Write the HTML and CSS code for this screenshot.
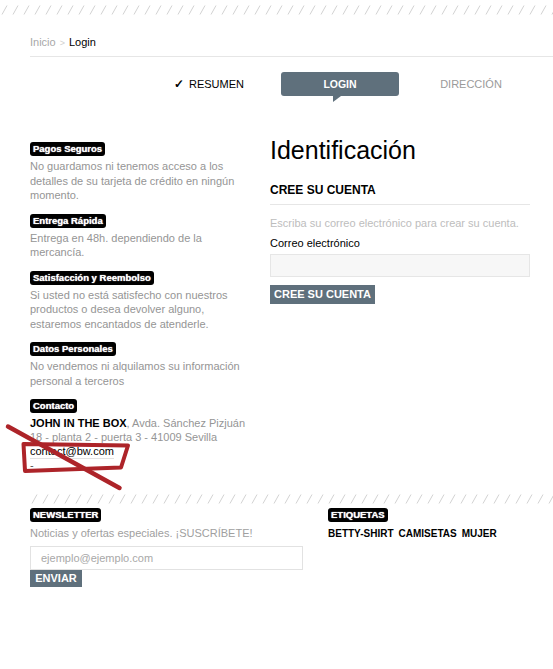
FILE: index.html
```html
<!DOCTYPE html>
<html lang="es">
<head>
<meta charset="utf-8">
<title>Login</title>
<link rel="stylesheet" href="styles.css">
</head>
<body>
<svg class="hatch hatch-top" width="100%" height="10" aria-hidden="true">
  <defs>
    <pattern id="hatchA" width="11" height="10" patternUnits="userSpaceOnUse">
      <line x1="2" y1="9.5" x2="7" y2="0.5" stroke="#d2d2d2" stroke-width="1"/>
    </pattern>
  </defs>
  <rect width="100%" height="10" fill="url(#hatchA)"/>
</svg>

<div class="page">
  <div class="breadcrumb"><span class="crumb">Inicio</span><span class="sep">&gt;</span><span class="current">Login</span></div>

  <div class="wrap">
    <div class="steps">
      <div class="step done"><span class="check">&#10003;</span>RESUMEN</div>
      <div class="step active">LOGIN</div>
      <div class="step">DIRECCIÓN</div>
    </div>

    <div class="main">
      <aside class="info">
        <div class="item">
          <h4 class="badge">Pagos Seguros</h4>
          <p>No guardamos ni tenemos acceso a los detalles de su tarjeta de crédito en ningún momento.</p>
        </div>
        <div class="item">
          <h4 class="badge">Entrega Rápida</h4>
          <p>Entrega en 48h. dependiendo de la mercancía.</p>
        </div>
        <div class="item">
          <h4 class="badge">Satisfacción y Reembolso</h4>
          <p>Si usted no está satisfecho con nuestros productos o desea devolver alguno, estaremos encantados de atenderle.</p>
        </div>
        <div class="item">
          <h4 class="badge">Datos Personales</h4>
          <p>No vendemos ni alquilamos su información personal a terceros</p>
        </div>
        <div class="item contact">
          <h4 class="badge">Contacto</h4>
          <p><strong>JOHN IN THE BOX</strong>, Avda. Sánchez Pizjuán 18 - planta 2 - puerta 3 - 41009 Sevilla</p>
          <div class="mail"><span>contact@bw.com</span></div>
          <div class="dash">-</div>
        </div>
      </aside>

      <section class="auth">
        <h1>Identificación</h1>
        <h3>CREE SU CUENTA</h3>
        <p class="hint">Escriba su correo electrónico para crear su cuenta.</p>
        <label class="label">Correo electrónico</label>
        <div class="field"></div>
        <button class="btn btn-create">CREE SU CUENTA</button>
      </section>
    </div>
  </div>

  <svg class="hatch hatch-bottom" width="100%" height="10" aria-hidden="true">
    <defs>
      <pattern id="hatchB" width="11" height="10" patternUnits="userSpaceOnUse">
        <line x1="2" y1="9.5" x2="7" y2="0.5" stroke="#d2d2d2" stroke-width="1"/>
      </pattern>
    </defs>
    <rect width="100%" height="10" fill="url(#hatchB)"/>
  </svg>

  <footer class="footer">
    <div class="newsletter">
      <h4 class="badge">NEWSLETTER</h4>
      <p>Noticias y ofertas especiales. ¡SUSCRÍBETE!</p>
      <div class="nl-input">ejemplo@ejemplo.com</div>
      <button class="btn btn-send">ENVIAR</button>
    </div>
    <div class="tags">
      <h4 class="badge">ETIQUETAS</h4>
      <div class="tag-list"><span>BETTY-SHIRT</span><span>CAMISETAS</span><span>MUJER</span></div>
    </div>
  </footer>
</div>

<svg class="markup" width="140" height="80" viewBox="0 420 140 80" aria-hidden="true">
  <path d="M23.5 444 L128 445.5 L121 467.5 L25 471 Z" fill="none" stroke="#ad2429" stroke-width="4" stroke-linejoin="round"/>
  <path d="M8 426.5 L119.5 488" fill="none" stroke="#ad2429" stroke-width="4.5" stroke-linecap="round"/>
</svg>
</body>
</html>
```

FILE: styles.css
```css
* { box-sizing: border-box; }

body {
  margin: 0;
  position: relative;
  background: #fff;
  color: #000;
  font-family: "Liberation Sans", Arial, sans-serif;
  font-size: 11px;
  line-height: 14.5px;
}

.hatch { display: block; }
.hatch-top { margin-top: 5px; }

.page { padding-left: 30px; }

.breadcrumb {
  margin-top: 20px;
  padding-bottom: 6px;
  border-bottom: 1px solid #e6e6e6;
  line-height: 14px;
}
.crumb { color: #a8a8a8; }
.sep { color: #d0d0d0; margin: 0 4px; font-size: 9px; }
.current { color: #000; }

.wrap { width: 500px; }

.steps {
  display: flex;
  justify-content: flex-end;
  gap: 13px;
  margin-top: 15px;
}
.step {
  position: relative;
  width: 118px;
  height: 24px;
  line-height: 24px;
  text-align: center;
  font-size: 11px;
  color: #9a9a9a;
}
.step.done { color: #000; }
.check { font-size: 12px; font-weight: bold; margin-right: 5px; }
.step.active {
  background: #5f707c;
  color: #fff;
  font-weight: bold;
  font-size: 10.5px;
  border-radius: 3px;
}
.step.active::after {
  content: "";
  position: absolute;
  left: 52px;
  top: 24px;
  width: 0;
  height: 0;
  border-top: 6px solid #5f707c;
  border-right: 8px solid transparent;
}

.main {
  display: flex;
  gap: 20px;
  margin-top: 40px;
}

.info { width: 220px; padding-top: 6px; }
.item { margin-bottom: 11px; }
.item p { margin: 3px 0 0; color: #959595; }
.item p strong { color: #000; }
.contact p { line-height: 14px; }

.badge {
  display: block;
  width: fit-content;
  margin: 0;
  padding: 0 3px;
  background: #000;
  color: #fff;
  font-size: 9.5px;
  font-weight: bold;
  line-height: 14px;
  border-radius: 3px;
  text-shadow: 0 0 1px #fff;
}

.mail { line-height: 14px; }
.mail span {
  display: inline-block;
  color: #000;
  border-bottom: 1px solid #e2e2e2;
}
.dash { color: #555; line-height: 12px; }

.auth { width: 260px; }
.auth h1 {
  margin: 0;
  font-size: 25px;
  font-weight: normal;
  line-height: 28px;
}
.auth h3 {
  margin: 19px 0 0;
  padding-bottom: 7px;
  border-bottom: 1px solid #e6e6e6;
  font-size: 12px;
  line-height: 14px;
}
.hint { margin: 11px 0 0; color: #bdbdbd; line-height: 14px; }
.label { display: block; margin-top: 6px; line-height: 14px; }
.field {
  margin-top: 4px;
  height: 23px;
  background: #f7f7f7;
  border: 1px solid #e6e6e6;
}

.btn {
  display: block;
  border: 0;
  padding: 0;
  background: #5f707c;
  color: #fff;
  font-family: "Liberation Sans", Arial, sans-serif;
  font-weight: bold;
  text-align: center;
}
.btn-create {
  margin-top: 8px;
  width: 105px;
  height: 19px;
  font-size: 11px;
  line-height: 19px;
}

.hatch-bottom { margin-top: 12px; }

.footer {
  display: flex;
  margin-top: 4px;
}
.newsletter { width: 298px; }
.newsletter p { margin: 4px 0 0; color: #a0a0a0; line-height: 14px; }
.nl-input {
  margin-top: 6px;
  width: 273px;
  height: 24px;
  padding-left: 10px;
  border: 1px solid #e2e2e2;
  color: #a8a8a8;
  line-height: 22px;
}
.btn-send {
  width: 52px;
  height: 17px;
  font-size: 11px;
  line-height: 17px;
}

.tags .tag-list {
  display: flex;
  gap: 5px;
  margin-top: 5px;
  font-size: 10px;
  font-weight: bold;
  line-height: 14px;
}

.markup {
  position: absolute;
  left: 0;
  top: 420px;
}
```
